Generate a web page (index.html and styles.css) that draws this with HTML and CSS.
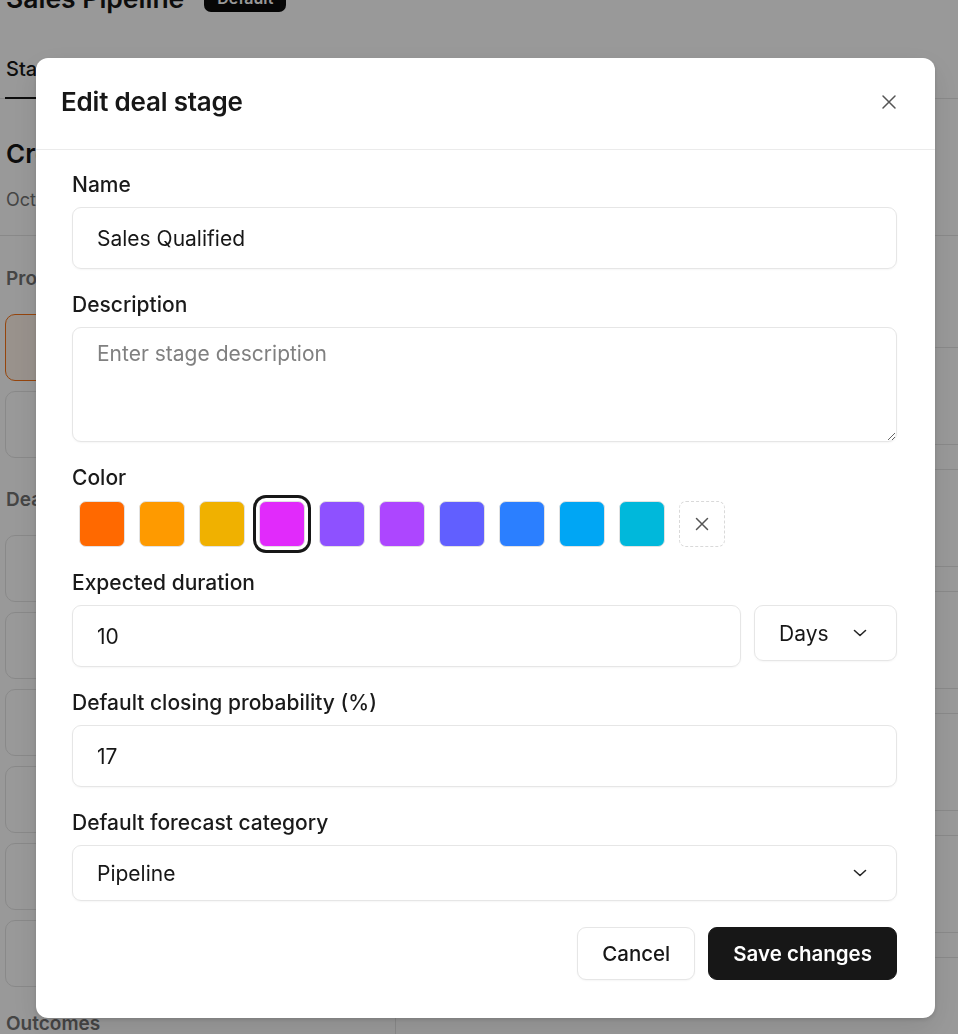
FILE: index.html
```html
<!DOCTYPE html>
<html lang="en">
<head>
<meta charset="utf-8">
<title>Edit deal stage</title>
<link rel="stylesheet" href="styles.css">
</head>
<body>
<div class="page">
  <header class="page-head">
    <h1 class="page-title">Sales Pipeline</h1>
    <span class="badge">Default</span>
  </header>
  <nav class="tabs">
    <span class="tab active">Stages</span>
    <span class="tab">Settings</span>
  </nav>
  <section class="summary">
    <h2 class="summary-title">Created pipeline</h2>
    <p class="summary-meta">Oct 12, 2024</p>
  </section>
  <div class="columns">
    <div class="col-left">
      <h3 class="group-title">Prospecting</h3>
      <div class="stage-card selected"></div>
      <div class="stage-card"></div>
      <h3 class="group-title second">Deal stages</h3>
      <div class="stage-card"></div>
      <div class="stage-card"></div>
      <div class="stage-card"></div>
      <div class="stage-card"></div>
      <div class="stage-card"></div>
      <div class="stage-card"></div>
      <h3 class="group-title third">Outcomes</h3>
    </div>
    <div class="col-right">
      <div class="detail-card"></div>
      <div class="detail-card"></div>
      <div class="detail-card"></div>
      <div class="detail-card"></div>
      <div class="detail-card"></div>
      <div class="detail-card"></div>
    </div>
  </div>
</div>

<div class="overlay"></div>

<div class="modal" role="dialog" aria-labelledby="modal-title">
  <div class="modal-head">
    <h2 id="modal-title" class="modal-title">Edit deal stage</h2>
    <button class="close-btn" aria-label="Close">
      <svg width="16" height="16" viewBox="0 0 16 16" fill="none" stroke="currentColor" stroke-width="1.5" stroke-linecap="round"><path d="M2 2l12 12M14 2L2 14"/></svg>
    </button>
  </div>
  <div class="modal-body">
    <div class="field">
      <label class="label">Name</label>
      <div class="input">Sales Qualified</div>
    </div>
    <div class="field">
      <label class="label">Description</label>
      <textarea class="textarea" placeholder="Enter stage description"></textarea>
    </div>
    <div class="field field-color">
      <label class="label label-color">Color</label>
      <div class="swatches">
        <span class="swatch sw-orange"></span>
        <span class="swatch sw-amber"></span>
        <span class="swatch sw-yellow"></span>
        <span class="swatch sw-fuchsia is-selected"></span>
        <span class="swatch sw-violet"></span>
        <span class="swatch sw-purple"></span>
        <span class="swatch sw-indigo"></span>
        <span class="swatch sw-blue"></span>
        <span class="swatch sw-sky"></span>
        <span class="swatch sw-cyan"></span>
        <span class="swatch swatch-none">
          <svg width="16" height="16" viewBox="0 0 16 16" fill="none" stroke="currentColor" stroke-width="1.5" stroke-linecap="round"><path d="M2.5 2.5l11 11M13.5 2.5l-11 11"/></svg>
        </span>
      </div>
    </div>
    <div class="field">
      <label class="label">Expected duration</label>
      <div class="row">
        <div class="input grow">10</div>
        <div class="select select-days">
          <span>Days</span>
          <svg class="chev" width="14" height="8" viewBox="0 0 14 8" fill="none" stroke="currentColor" stroke-width="1.6" stroke-linecap="round" stroke-linejoin="round"><path d="M1.5 1.5l5.5 5 5.5-5"/></svg>
        </div>
      </div>
    </div>
    <div class="field">
      <label class="label">Default closing probability (%)</label>
      <div class="input">17</div>
    </div>
    <div class="field field-last">
      <label class="label">Default forecast category</label>
      <div class="select select-full">
        <span>Pipeline</span>
        <svg class="chev" width="14" height="8" viewBox="0 0 14 8" fill="none" stroke="currentColor" stroke-width="1.6" stroke-linecap="round" stroke-linejoin="round"><path d="M1.5 1.5l5.5 5 5.5-5"/></svg>
      </div>
    </div>
    <div class="actions">
      <button class="btn btn-outline">Cancel</button>
      <button class="btn btn-primary">Save changes</button>
    </div>
  </div>
</div>
</body>
</html>
```

FILE: styles.css
```css
* { box-sizing: border-box; }

html, body {
  margin: 0;
  padding: 0;
  background: #ffffff;
  overflow: hidden;
  height: 100%;
}

body {
  font-family: Inter, "Noto Sans", "Liberation Sans", sans-serif;
  color: #171717;
}

/* ---------- background page ---------- */
.page {
  width: 1200px;
  padding-left: 5px;
}

.page-head {
  display: flex;
  align-items: center;
  gap: 20px;
  height: 32px;
  margin-top: -18px;
  padding-left: 1px;
}

.page-title {
  margin: 0;
  font-size: 26.5px;
  line-height: 32px;
  font-weight: 600;
  color: #171717;
}

.badge {
  display: inline-flex;
  align-items: center;
  height: 28px;
  padding: 0 13px;
  border-radius: 7px;
  background: #0a0a0a;
  color: #fff;
  font-size: 16px;
  font-weight: 600;
}

.tabs {
  display: flex;
  gap: 32px;
  margin-top: 41px;
  border-bottom: 1px solid #e5e5e5;
  margin-left: -5px;
  padding-left: 5px;
}

.tab {
  font-size: 20px;
  line-height: 28px;
  font-weight: 500;
  padding: 0 1px 14px;
  border-bottom: 2px solid transparent;
  margin-bottom: -1px;
  color: #171717;
}

.tab.active { border-bottom-color: #171717; }

.summary {
  padding: 39px 0 23px 6px;
  border-bottom: 1px solid #e5e5e5;
  margin-left: -5px;
}

.summary-title {
  margin: 0;
  font-size: 26px;
  line-height: 32px;
  font-weight: 600;
}

.summary-meta {
  margin: 18px 0 0;
  font-size: 18px;
  line-height: 24px;
  color: #737373;
}

.columns {
  display: grid;
  grid-template-columns: 375px 780px;
  column-gap: 15px;
}

.col-left {
  padding-top: 31px;
}

.group-title {
  margin: 0 0 23px;
  padding-left: 1px;
  font-size: 19px;
  line-height: 24px;
  font-weight: 600;
  color: #737373;
}

.group-title.second { margin-top: 30px; }
.group-title.third { margin-top: 25px; }

.stage-card {
  height: 67px;
  border: 1px solid #e5e5e5;
  border-radius: 10px;
  margin-bottom: 10px;
  background: #fff;
}

.stage-card.selected {
  border-color: #f97316;
  background: #fff4ea;
}

.col-right {
  padding-top: 111px;
  display: flex;
  flex-direction: column;
  gap: 24px;
}

.detail-card {
  height: 98px;
  border: 1px solid #e5e5e5;
  border-radius: 10px;
  flex: none;
}

/* ---------- overlay + modal ---------- */
.overlay {
  position: fixed;
  inset: 0;
  background: rgba(0, 0, 0, 0.4);
}

.modal {
  position: fixed;
  left: 36px;
  top: 58px;
  width: 899px;
  background: #fff;
  border-radius: 12px;
  box-shadow: 0 2px 4px rgba(0, 0, 0, 0.12), 0 10px 30px rgba(0, 0, 0, 0.1);
}

.modal-head {
  height: 92px;
  display: flex;
  align-items: center;
  justify-content: space-between;
  padding: 0 34px 3px 25px;
  border-bottom: 1px solid #ebebeb;
}

.modal-title {
  margin: 0;
  font-size: 26px;
  line-height: 32px;
  font-weight: 600;
  color: #171717;
  letter-spacing: -0.2px;
}

.close-btn {
  width: 24px;
  height: 24px;
  display: flex;
  align-items: center;
  justify-content: center;
  padding: 0;
  border: 0;
  background: transparent;
  color: #555;
}

.modal-body {
  padding: 23px 38px 38px 36px;
}

.field { margin-bottom: 24px; }
.field-color { margin-bottom: 18px; }
.field-last { margin-bottom: 26px; }

.label {
  display: block;
  font-size: 21px;
  line-height: 24px;
  font-weight: 500;
  color: #1a1a1a;
  margin-bottom: 10px;
}

.label-color { margin-bottom: 5px; }

.input {
  height: 62px;
  display: flex;
  align-items: center;
  padding: 0 24px;
  border: 1px solid #e6e6e6;
  border-radius: 9px;
  font-size: 21px;
  color: #171717;
  box-shadow: 0 1px 2px rgba(0, 0, 0, 0.04);
}

.textarea {
  display: block;
  width: 100%;
  height: 115px;
  padding: 12px 24px;
  border: 1px solid #e6e6e6;
  border-radius: 9px;
  font-family: inherit;
  font-size: 21px;
  line-height: 28px;
  color: #171717;
  box-shadow: 0 1px 2px rgba(0, 0, 0, 0.04);
  outline: none;
}

.textarea::placeholder { color: #808080; }

.swatches {
  display: flex;
  gap: 14px;
  padding: 6px 7px;
}

.swatch {
  width: 46px;
  height: 46px;
  border-radius: 7px;
  border: 1px solid #e2e2e2;
  flex: none;
}

.swatch.is-selected {
  box-shadow: 0 0 0 3px #fff, 0 0 0 6px #171717;
}

.sw-orange { background: #ff6900; }
.sw-amber { background: #fe9a00; }
.sw-yellow { background: #f0b100; }
.sw-fuchsia { background: #e12afb; }
.sw-violet { background: #8e51ff; }
.sw-purple { background: #ad46ff; }
.sw-indigo { background: #615fff; }
.sw-blue { background: #2b7fff; }
.sw-sky { background: #00a6f4; }
.sw-cyan { background: #00b8db; }

.swatch-none {
  border: 1px dashed #d9d9d9;
  background: #fff;
  color: #555;
  display: flex;
  align-items: center;
  justify-content: center;
}

.row {
  display: flex;
  align-items: flex-start;
  gap: 13px;
}

.grow { flex: 1; }

.select {
  height: 56px;
  display: flex;
  align-items: center;
  justify-content: space-between;
  padding: 0 29px 0 24px;
  border: 1px solid #e6e6e6;
  border-radius: 9px;
  font-size: 21px;
  color: #171717;
  box-shadow: 0 1px 2px rgba(0, 0, 0, 0.04);
}

.select-days { width: 143px; flex: none; }
.select-full { height: 56px; }

.chev { color: #262626; flex: none; }

.actions {
  display: flex;
  justify-content: flex-end;
  gap: 13px;
}

.btn {
  height: 53px;
  padding: 0 24px;
  border-radius: 9px;
  font-family: inherit;
  font-size: 20.5px;
  font-weight: 500;
  cursor: pointer;
}

.btn-outline {
  background: #fff;
  color: #171717;
  border: 1px solid #e6e6e6;
  box-shadow: 0 1px 2px rgba(0, 0, 0, 0.04);
}

.btn-primary {
  background: #171717;
  color: #fff;
  border: 1px solid #171717;
  font-weight: 600;
}
```
